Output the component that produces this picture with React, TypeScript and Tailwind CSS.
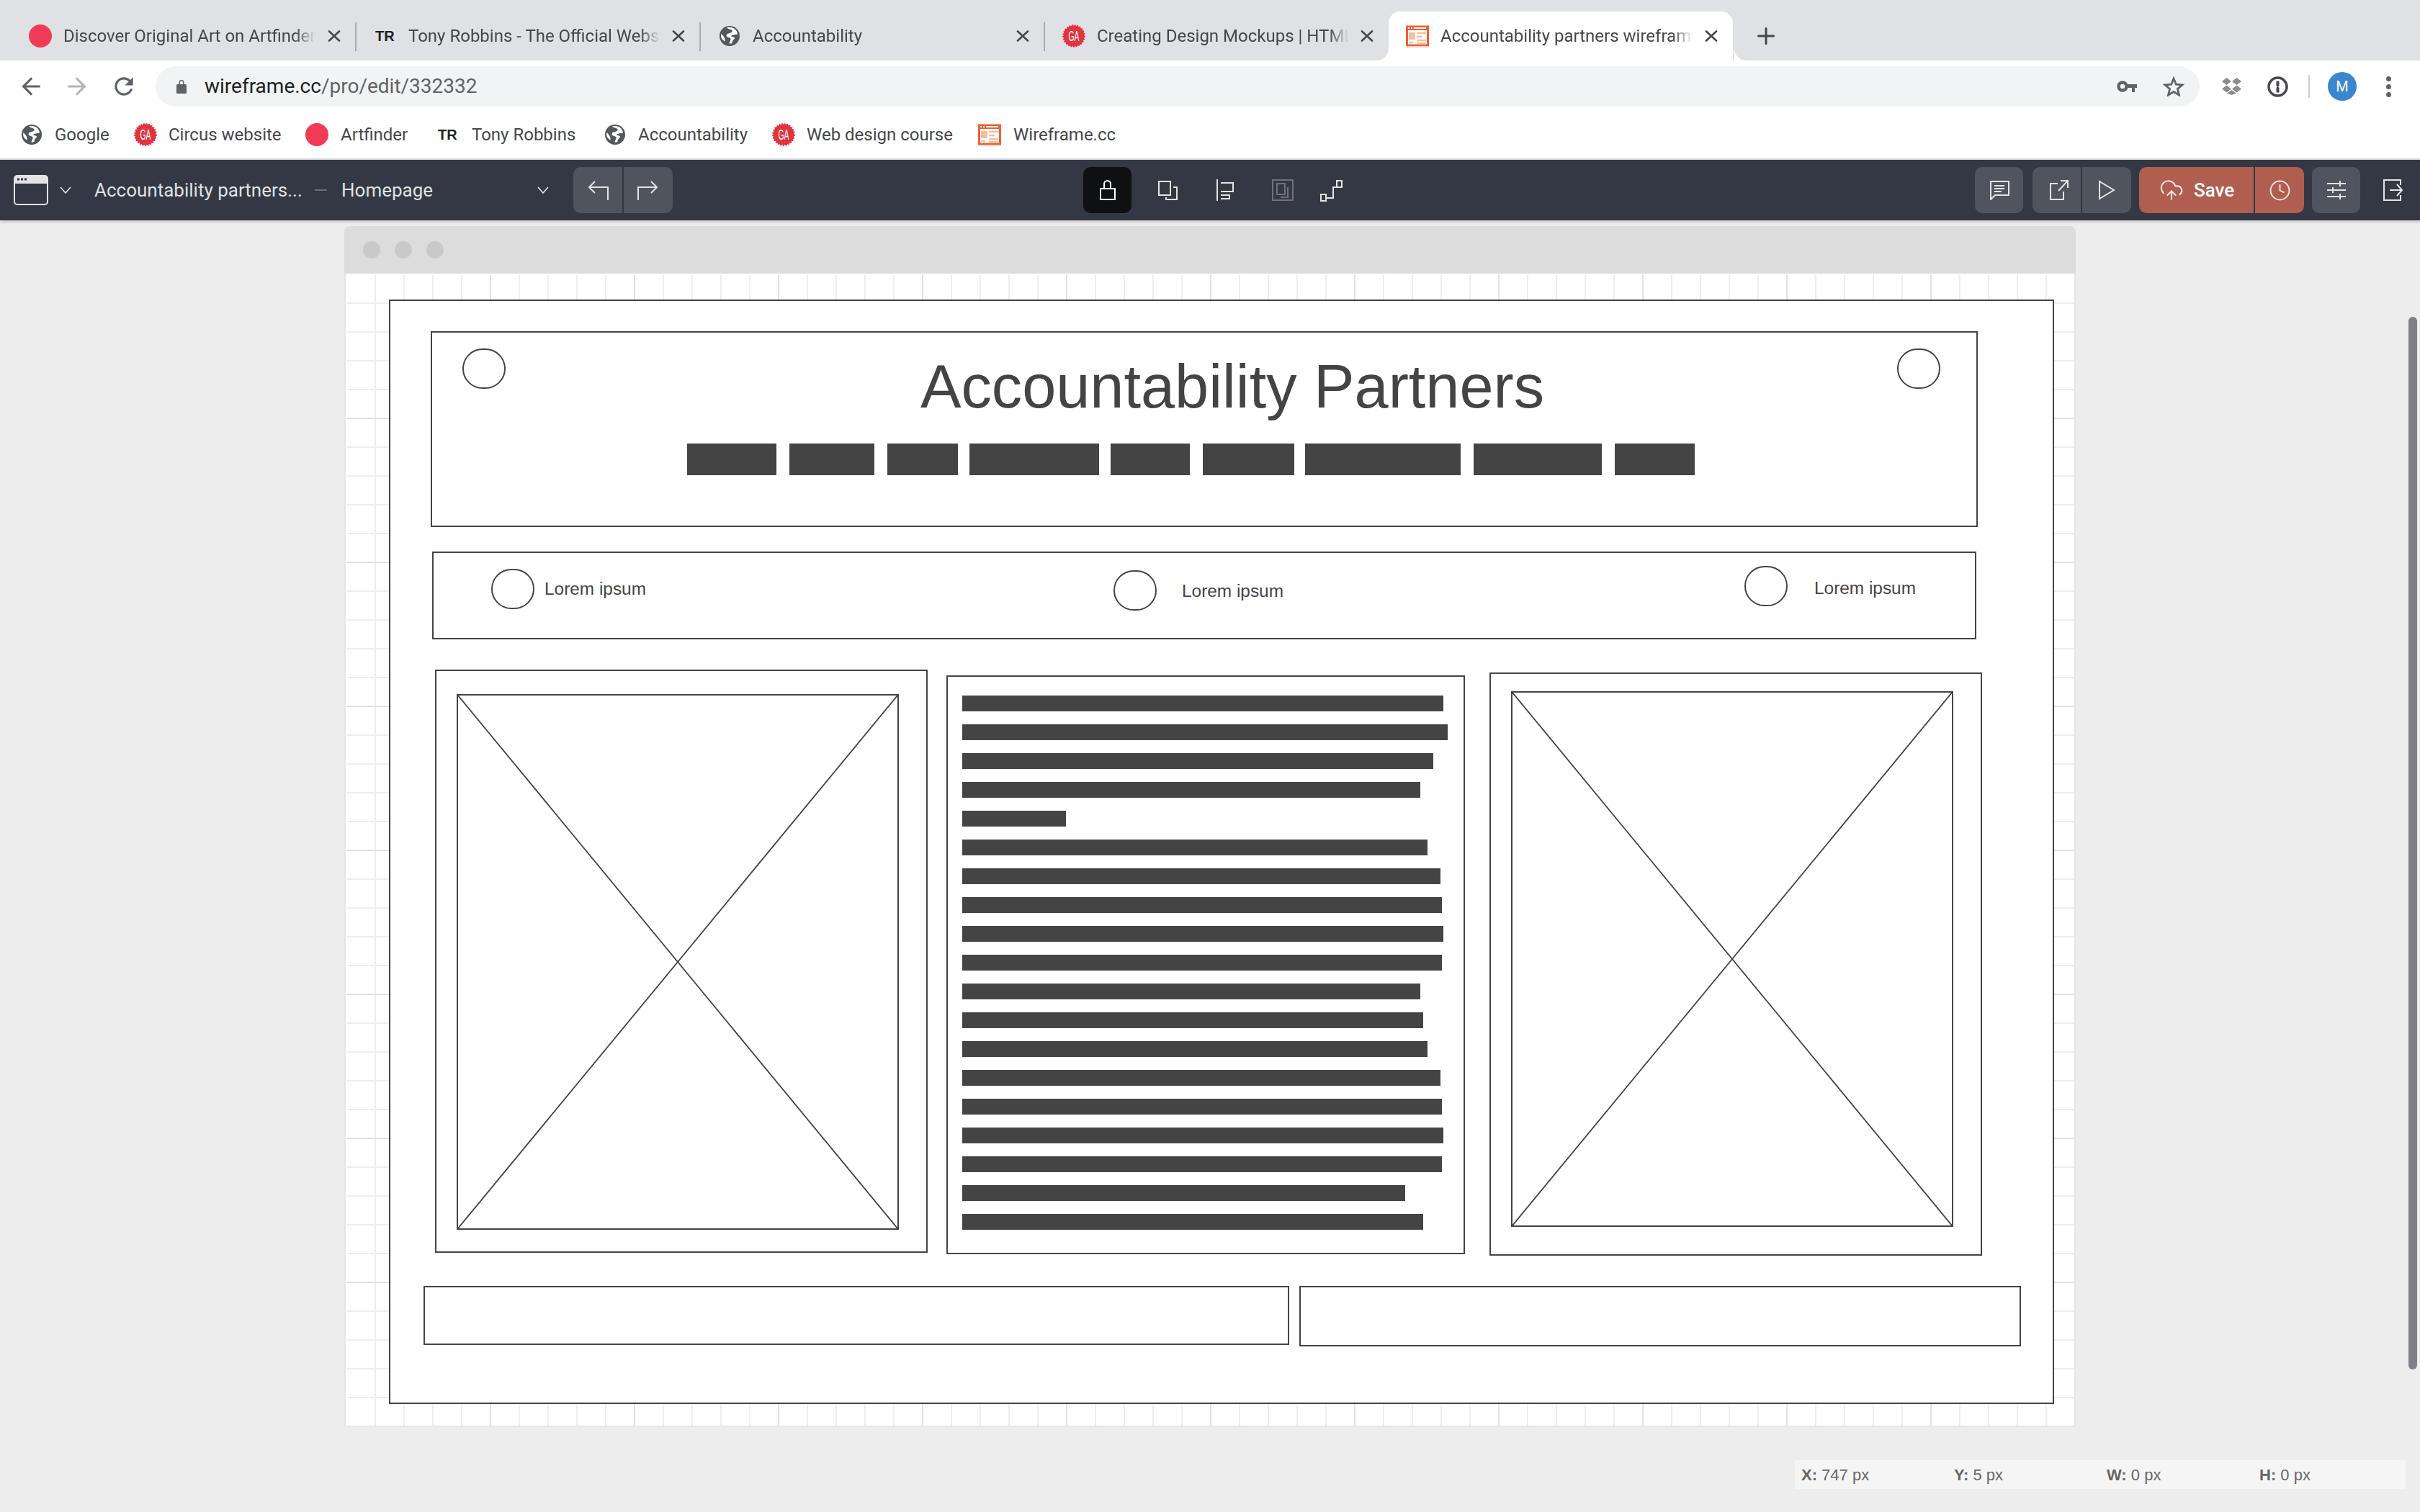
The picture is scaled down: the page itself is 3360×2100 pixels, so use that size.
import { Clock, CloudUpload } from 'lucide-react';

const ink = '#444444';
const chromeFont = "font-['Roboto',sans-serif]";

function CloseIcon() {
  return (
    <svg width="18" height="16" viewBox="0 0 18 16" fill="none" stroke="#45474a" strokeWidth="2.6" strokeLinecap="round">
      <path d="M2 1.5 16 14.5M16 1.5 2 14.5" />
    </svg>
  );
}

function GlobeIcon() {
  return (
    <svg width="28" height="28" viewBox="0 0 28 28">
      <circle cx="14" cy="14" r="14" fill="#54575c" />
      <path d="M10 2.5c2 2.5 6 1.5 7.5 4 .8 1.6-1.5 3-3.5 3.4-2.5.5-5 1.6-4.3 4 .6 2 3.6 1.5 5.3 3 1.2 1.2.3 3-.4 4.3l-1.2 3.3c1.2.2 3-.1 4-.6.2-2.8 1.500-4.500 3.200-6 .9-.9.2-2.200-1-2.500l-3.600-.9c.4-1.700 2.800-1.800 4.800-2.300 1.200-.3 3-.4 4.200-.8C24.500 6 20 2 14 2c-1.400 0-2.800.1-4 .5z" fill="#fff" />
      <path d="M2.500 11c1.500 1.800 3.500 3.500 4.500 6 .6 1.700 1.100 3.200 0 4.500C4 19.500 2 16.500 2 14c0-1 .2-2 .5-3z" fill="#fff" />
    </svg>
  );
}

function GaIcon() {
  return (
    <svg width="32" height="32" viewBox="0 0 32 32">
      <circle cx="16" cy="16" r="14.500" fill="#e2333f" stroke="#e2333f" strokeWidth="2.500" strokeDasharray="2 1.600" />
      <text x="16" y="23" textAnchor="middle" fill="#fff" fontSize="20" fontWeight="400" fontFamily="Liberation Sans, sans-serif" textLength="15" lengthAdjust="spacingAndGlyphs">GA</text>
    </svg>
  );
}

function DotIcon() {
  return <span className="block h-8 w-8 rounded-full bg-[#f03a56]" />;
}

function TrIcon() {
  return <span className="block w-7 font-['Liberation_Sans',sans-serif] text-[20px] leading-none font-bold text-[#222]">TR</span>;
}

function WireframeIcon() {
  return (
    <svg width="32" height="32" viewBox="0 0 32 32">
      <rect x="0" y="2" width="32" height="28" fill="#fff" />
      <rect x="1.500" y="3" width="29" height="26" fill="none" stroke="#ee6030" strokeWidth="3" />
      <rect x="0" y="2" width="32" height="6" fill="#ee6030" />
      <path d="M3 5h2M7 5h2M11 5h17" stroke="#fff" strokeWidth="2" />
      <rect x="4" y="11" width="9" height="10" fill="#f6c09f" />
      <path d="M15 12h13M15 17h8M15 22h13M4 25h6M15 26h13" stroke="#f6c09f" strokeWidth="2.500" />
      <rect x="1" y="30" width="30" height="2" fill="#f3d4c6" />
    </svg>
  );
}

function KeyIcon() {
  return (
    <svg width="28" height="16" viewBox="0 0 28 16" fill="none">
      <circle cx="8" cy="8" r="5.500" stroke="#5f6368" strokeWidth="4.500" />
      <path d="M14 5h14v5h-3v6h-4v-6h-7z" fill="#5f6368" />
    </svg>
  );
}

function StarIcon() {
  return (
    <svg width="30" height="28" viewBox="0 0 30 28" fill="none" stroke="#5f6368" strokeWidth="2.800" strokeLinejoin="miter">
      <path d="M15 3 18.300 11.200 27 11.900 20.400 17.500 22.500 26 15 21.500 7.500 26 9.600 17.500 3 11.900 11.700 11.200Z" />
    </svg>
  );
}

function DropboxIcon() {
  return (
    <svg width="29" height="24" viewBox="0 0 29 24" fill="#8c8c8c">
      <path d="M7.500 0 14 5 7.500 10 1 5zM21.500 0 28 5 21.500 10 15 5zM7.500 10.500 14 15.500 7.500 20.500 1 15.500zM21.500 10.500 28 15.500 21.500 20.500 15 15.500zM14.500 17 21 21.500 14.500 24 8 21.500z" />
    </svg>
  );
}

function OnePasswordIcon() {
  return (
    <svg width="29" height="29" viewBox="0 0 29 29" fill="none">
      <circle cx="14.500" cy="14.500" r="12.500" stroke="#45474a" strokeWidth="3.500" />
      <path d="M12.500 6.500h4v6.500l-1.500 1.500 1.500 1.500v6.500h-4v-6l1-2-1-2z" fill="#45474a" />
    </svg>
  );
}

function WindowIcon() {
  return (
    <svg width="48" height="42" viewBox="0 0 48 42" fill="none">
      <rect x="1" y="1" width="46" height="40" rx="4" stroke="#e3e3e3" strokeWidth="2" />
      <path d="M1 5a4 4 0 0 1 4-4h38a4 4 0 0 1 4 4v7H1z" fill="#e3e3e3" />
      <path d="M5 6h3M10 6h3M15 6h3" stroke="#343844" strokeWidth="3" />
    </svg>
  );
}

function Chevron() {
  return (
    <svg width="16" height="10" viewBox="0 0 16 10" fill="none" stroke="#e3e3e3" strokeWidth="1.600">
      <path d="M1 1 8 9 15 1" />
    </svg>
  );
}

function TurnIcon({ flip }: { flip?: boolean }) {
  return (
    <svg width="30" height="28" viewBox="0 0 30 28" fill="none" stroke="#e3e3e3" strokeWidth="2" className={flip ? '-scale-x-100' : ''}>
      <path d="M10 2 2 10 10 18M2 10H28V28" />
    </svg>
  );
}

function Line({ d, size = [28, 28], color = '#e3e3e3', width = 2 }: { d: string; size?: number[]; color?: string; width?: number }) {
  return (
    <svg width={size[0]} height={size[1]} viewBox={`0 0 ${size[0]} ${size[1]}`} fill="none" stroke={color} strokeWidth={width}>
      <path d={d} />
    </svg>
  );
}

function ToolButton({ className, children }: { className?: string; children: React.ReactNode }) {
  return <div className={`flex h-16 items-center justify-center ${className}`}>{children}</div>;
}

const tabs = [
  { title: 'Discover Original Art on Artfinder', icon: <DotIcon />, pad: 'pl-6' },
  { title: 'Tony Robbins - The Official Website', icon: <TrIcon />, pad: 'pl-[25px]' },
  { title: 'Accountability', icon: <GlobeIcon />, pad: 'pl-[25px]' },
  { title: 'Creating Design Mockups | HTML', icon: <GaIcon />, pad: 'pl-[25px]' },
  { title: 'Accountability partners wireframe', icon: <WireframeIcon />, pad: 'pl-6', active: true },
];

const bookmarks = [
  { label: 'Google', icon: <GlobeIcon />, width: 'w-[156px]', gap: 'gap-[18px]' },
  { label: 'Circus website', icon: <GaIcon />, width: 'w-[238px]', gap: 'gap-4' },
  { label: 'Artfinder', icon: <DotIcon />, width: 'w-[184px]', gap: 'gap-[17px]' },
  { label: 'Tony Robbins', icon: <TrIcon />, width: 'w-[232px]', gap: 'gap-[19px]' },
  { label: 'Accountability', icon: <GlobeIcon />, width: 'w-[232px]', gap: 'gap-[18px]' },
  { label: 'Web design course', icon: <GaIcon />, width: 'w-[286px]', gap: 'gap-4' },
  { label: 'Wireframe.cc', icon: <WireframeIcon />, width: 'w-[200px]', gap: 'gap-[17px]' },
];

function TabBar() {
  return (
    <div className="flex h-[84px] items-end bg-[#dfe1e5] pl-4">
      {tabs.map((tab, i) => (
        <div
          key={tab.title}
          className={`relative flex h-[68px] w-[478px] shrink-0 items-center ${tab.pad} ${tab.active ? 'rounded-t-[16px] bg-white' : ''}`}
        >
          {tab.active && (
            <>
              <span className="absolute bottom-0 -left-4 h-4 w-4 bg-[radial-gradient(circle_at_0_0,#dfe1e5_15.500px,#ffffff_16px)]" />
              <span className="absolute -right-[18px] bottom-0 h-4 w-4 bg-[radial-gradient(circle_at_100%_0,#dfe1e5_15.500px,#ffffff_16px)]" />
            </>
          )}
          <div className="flex w-8 shrink-0 justify-center">{tab.icon}</div>
          <div className="ml-4 w-[350px] overflow-hidden text-[24px] whitespace-nowrap text-[#45474a] [mask-image:linear-gradient(to_right,#000_92%,transparent)]">
            {tab.title}
          </div>
          <div className="absolute right-[21px] flex">
            <CloseIcon />
          </div>
          {i < 3 && <span className="absolute top-[15px] -right-px h-10 w-0.5 bg-[#a9abb0]" />}
        </div>
      ))}
      <div className="mb-[22px] ml-[34px] flex">
        <svg width="24" height="24" viewBox="0 0 24 24" stroke="#45474a" strokeWidth="3" strokeLinecap="round">
          <path d="M12 1.500v21M1.500 12h21" />
        </svg>
      </div>
    </div>
  );
}

function AddressBar() {
  return (
    <div className="flex h-[72px] items-center bg-white pl-6">
      <svg width="38" height="38" viewBox="0 0 24 24" fill="#5f6368">
        <path d="M20 11H7.830l5.590-5.590L12 4l-8 8 8 8 1.410-1.410L7.830 13H20v-2z" />
      </svg>
      <svg width="38" height="38" viewBox="0 0 24 24" fill="#b4b6ba" className="ml-[26px]">
        <path d="M12 4l-1.410 1.410L16.170 11H4v2h12.170l-5.580 5.590L12 20l8-8z" />
      </svg>
      <svg width="38" height="38" viewBox="0 0 24 24" fill="#5f6368" className="ml-[27px]">
        <path d="M17.650 6.350C16.200 4.900 14.210 4 12 4c-4.420 0-7.990 3.580-7.990 8s3.570 8 7.990 8c3.730 0 6.840-2.550 7.730-6h-2.080c-.82 2.330-3.040 4-5.650 4-3.310 0-6-2.690-6-6s2.690-6 6-6c1.660 0 3.140.69 4.220 1.780L13 11h7V4l-2.350 2.350z" />
      </svg>
      <div className="ml-[25px] flex h-14 w-[2838px] items-center rounded-full bg-[#f1f3f4] pr-[21px] pl-[29px]">
        <svg width="14" height="20" viewBox="0 0 14 20" fill="#5f6368">
          <path d="M3.500 8V4.500a3.500 3.500 0 0 1 7 0V8H9V4.500a2 2 0 0 0-4 0V8z" />
          <rect y="7" width="14" height="13" rx="1.500" />
        </svg>
        <div className="ml-[25px] text-[28px] text-[#5f6368]">
          <span className="text-[#202124]">wireframe.cc</span>/pro/edit/332332
        </div>
        <div className="ml-auto flex items-center gap-9">
          <KeyIcon />
          <StarIcon />
        </div>
      </div>
      <div className="ml-[30px] flex">
        <DropboxIcon />
      </div>
      <div className="ml-[35px] flex">
        <OnePasswordIcon />
      </div>
      <span className="ml-7 h-8 w-0.5 bg-[#cfd0d2]" />
      <div className="ml-[25px] flex h-10 w-10 items-center justify-center rounded-full bg-[#3a87d0] text-[20px] text-white">M</div>
      <div className="ml-10 flex w-2 flex-col items-center gap-[4px]">
        <span className="h-[7px] w-[7px] rounded-full bg-[#5f6368]" />
        <span className="h-[7px] w-[7px] rounded-full bg-[#5f6368]" />
        <span className="h-[7px] w-[7px] rounded-full bg-[#5f6368]" />
      </div>
    </div>
  );
}

function BookmarksBar() {
  return (
    <div className="flex h-[66px] items-center border-b-2 border-[#d8dade] bg-white pb-0.5 pl-[30px]">
      {bookmarks.map((b) => (
        <div key={b.label} className={`flex shrink-0 items-center text-[24px] text-[#45474a] ${b.width} ${b.gap}`}>
          {b.icon}
          <span>{b.label}</span>
        </div>
      ))}
    </div>
  );
}

function AppBar() {
  return (
    <div className="relative z-10 flex h-[84px] items-center bg-[#343844] pr-6 pl-[19px] text-[26px] text-[#dfe1e5] shadow-[0_2px_4px_rgba(0,0,0,0.2)]">
      <WindowIcon />
      <div className="ml-4 flex">
        <Chevron />
      </div>
      <span className="ml-8 w-[306px] shrink-0 whitespace-nowrap">Accountability partners...</span>
      <span className="h-0.5 w-[17px] bg-[#6b6e78]" />
      <span className="ml-5 w-[272px] shrink-0">Homepage</span>
      <Chevron />
      <div className="ml-[34px] flex h-16 w-[138px] overflow-hidden rounded-[10px] bg-[#50545f]">
        <ToolButton className="w-[69px] border-r border-[#343844] pl-0.5">
          <TurnIcon />
        </ToolButton>
        <ToolButton className="w-[69px] border-l border-[#343844] pr-0.5">
          <TurnIcon flip />
        </ToolButton>
      </div>

      <ToolButton className="ml-[570px] w-[67px] rounded-[10px] bg-[#0e1012]">
        <Line d="M7 12V5.500a4.500 4.500 0 0 1 9 0V12M2 12H22V27H2Z" size={[24, 28]} color="#ffffff" />
      </ToolButton>
      <div className="ml-[37px] flex">
        <Line d="M1 1H17V20H1ZM21 9H26V26H11V23" size={[27, 27]} />
      </div>
      <div className="ml-[54px] flex">
        <Line d="M1 0V30M6 5H23V17H6M6 22H18V27H6" size={[24, 30]} />
      </div>
      <div className="ml-[53px] flex">
        <Line d="M1 1H29V29H1ZM7 6H18V21H7ZM22 11V25H12" size={[30, 30]} color="#6e717b" />
      </div>
      <div className="ml-[37px] flex">
        <Line d="M23 2H30V11H23ZM1 21H8V30H1ZM26 11H18V26H8" size={[31, 31]} />
      </div>

      <div className="ml-auto flex items-center">
        <ToolButton className="w-[67px] rounded-[10px] bg-[#50545f]">
          <Line d="M2 2H28V21H9L3 27V2ZM8 8H22M8 12H22M8 16H18" size={[30, 28]} />
        </ToolButton>
        <div className="ml-[13px] flex h-16 w-[137px] overflow-hidden rounded-[10px] bg-[#50545f]">
          <ToolButton className="w-[69px] border-r-2 border-[#343844] pl-1.5">
            <Line d="M12 5H2V27H20V16M13 15 26 1M16 1H26V11" size={[28, 28]} />
          </ToolButton>
          <ToolButton className="w-[68px]">
            <Line d="M2 2 22 14 2 26Z" size={[24, 28]} />
          </ToolButton>
        </div>
        <div className="ml-[11px] flex h-16 w-[229px] overflow-hidden rounded-[10px] bg-[#b05e50] text-white">
          <div className="flex w-[161px] items-center gap-[14px] border-r-2 border-[#343844] pl-7 font-medium">
            <CloudUpload size={34} strokeWidth={1.500} color="#f3e3df" />
            <span>Save</span>
          </div>
          <ToolButton className="w-[68px]">
            <Clock size={31} strokeWidth={1.500} color="#f3e3df" />
          </ToolButton>
        </div>
        <ToolButton className="ml-[11px] w-[67px] rounded-[10px] bg-[#50545f]">
          <Line d="M1 5H27M19 1V9M1 14H27M9 10V18M1 23H27M19 19V27" size={[28, 28]} />
        </ToolButton>
        <div className="ml-[31px] flex">
          <Line d="M25 8V1H2V29H25V22M10 15H27M20 7 27 15 20 23" size={[28, 30]} />
        </div>
      </div>
    </div>
  );
}

function Circle({ className }: { className: string }) {
  return <div className={`absolute h-14 w-[60px] rounded-full border-2 border-[#444444] ${className}`} />;
}

function Lorem({ className }: { className: string }) {
  return <div className={`absolute text-[24.4px] leading-6 text-[#444444] ${className}`}>Lorem ipsum</div>;
}

function ImageBox({ className, inner }: { className: string; inner: string }) {
  return (
    <div className={`absolute h-[810px] w-[684px] border-2 border-[#444444] pl-7 ${inner} ${className}`}>
      <div className="relative h-[744px] w-[614px] border-2 border-[#444444]">
        <svg className="absolute inset-0 h-full w-full" viewBox="0 0 100 100" preserveAspectRatio="none">
          <path d="M0 0 100 100M100 0 0 100" stroke={ink} strokeWidth="1.800" vectorEffect="non-scaling-stroke" />
        </svg>
      </div>
    </div>
  );
}

// nav blocks under the title: [width, gap before]
const navBlocks = [
  [124, 0],
  [118, 18],
  [98, 18],
  [180, 16],
  [110, 16],
  [127, 18],
  [216, 15],
  [178, 18],
  [111, 18],
];

const textBars = [668, 674, 654, 636, 144, 646, 664, 666, 668, 666, 636, 640, 646, 664, 666, 668, 666, 615, 640];

function WireframePage() {
  return (
    <div className="relative h-[1534px] w-[2312px] border-2 border-[#444444] bg-white font-['Liberation_Sans',sans-serif]">
      <div className="absolute top-[42px] left-14 h-[272px] w-[2148px] border-2 border-[#444444]" />
      <Circle className="top-[66px] left-[100px]" />
      <Circle className="top-[66px] left-[2092px]" />
      <div className="absolute top-[76px] left-[736px] text-[84.700px] leading-[85px] whitespace-nowrap text-[#444444]">Accountability Partners</div>
      <div className="absolute top-[198px] left-[412px] flex">
        {navBlocks.map(([w, gap], i) => (
          <div key={i} className="h-11 bg-[#444444]" style={{ width: w, marginLeft: gap }} />
        ))}
      </div>

      <div className="absolute top-[348px] left-[58px] h-[122px] w-[2144px] border-2 border-[#444444]" />
      <Circle className="top-[372px] left-[140px]" />
      <Lorem className="top-[388px] left-[214px]" />
      <Circle className="top-[374px] left-[1004px]" />
      <Lorem className="top-[391px] left-[1099px]" />
      <Circle className="top-[368px] left-[1880px]" />
      <Lorem className="top-[387px] left-[1977px]" />

      <ImageBox className="top-[512px] left-[62px]" inner="pt-8" />
      <div className="absolute top-[520px] left-[772px] flex h-[804px] w-[720px] flex-col gap-[18px] border-2 border-[#444444] pt-[26px] pl-5">
        {textBars.map((w, i) => (
          <div key={i} className="h-[22px] shrink-0 bg-[#444444]" style={{ width: w }} />
        ))}
      </div>
      <ImageBox className="top-[516px] left-[1526px]" inner="pt-6" />

      <div className="absolute top-[1368px] left-[46px] h-[82px] w-[1202px] border-2 border-[#444444]" />
      <div className="absolute top-[1368px] left-[1262px] h-[84px] w-[1002px] border-2 border-[#444444]" />
    </div>
  );
}

function Canvas() {
  return (
    <div className="relative flex-1 bg-[#ededed] pt-2 pl-[478px]">
      <div className="w-[2404px]">
        <div className="flex h-[66px] items-center gap-5 rounded-t-lg bg-[#dcdcdc] pl-[26px]">
          <span className="h-6 w-6 rounded-full bg-[#c9c9c9]" />
          <span className="h-6 w-6 rounded-full bg-[#c9c9c9]" />
          <span className="h-6 w-6 rounded-full bg-[#c9c9c9]" />
        </div>
        <div className="h-[1602px] border-x-2 border-b-2 border-[#e6e6e6] bg-white pt-0.5 pl-0.5">
          <div className="h-full w-full pt-[34px] pl-[58px] [background-image:linear-gradient(to_right,transparent_198px,#e2e2e2_198px),linear-gradient(to_bottom,transparent_198px,#e2e2e2_198px),linear-gradient(to_right,transparent_38px,#eeeeee_38px),linear-gradient(to_bottom,transparent_38px,#eeeeee_38px)] [background-size:200px_200px,200px_200px,40px_40px,40px_40px]">
            <WireframePage />
          </div>
        </div>
      </div>

      <div className="absolute top-[134px] right-1 h-[1462px] w-3 rounded-full bg-[#7f8085]" />

      <div className="absolute right-5 bottom-8 grid h-10 w-[848px] grid-cols-[212px_212px_212px_1fr] items-center bg-[#f5f5f5] pl-[9px] font-['Liberation_Sans',sans-serif] text-[22px] text-[#666666]">
        <div><b>X:</b> 747 px</div>
        <div><b>Y:</b> 5 px</div>
        <div><b>W:</b> 0 px</div>
        <div><b>H:</b> 0 px</div>
      </div>
    </div>
  );
}

export default function App() {
  return (
    <div className={`flex h-[2100px] w-[3360px] flex-col overflow-hidden ${chromeFont}`}>
      <TabBar />
      <AddressBar />
      <BookmarksBar />
      <AppBar />
      <Canvas />
    </div>
  );
}
